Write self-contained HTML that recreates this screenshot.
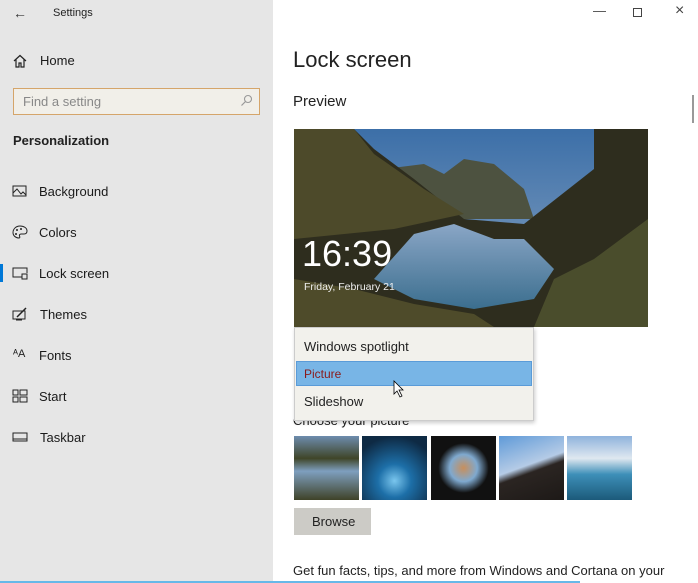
<!DOCTYPE html>
<html><head><meta charset="utf-8"><style>
*{margin:0;padding:0;box-sizing:border-box}
body{width:698px;height:583px;overflow:hidden;font-family:"Liberation Sans",sans-serif;background:#fff;position:relative;color:#000}
.side{position:absolute;left:0;top:0;width:273px;height:583px;background:#e6e6e6}
.t{position:absolute;white-space:nowrap}
.nav{position:absolute;left:39px;font-size:13px;color:#1a1a1a}
.ic{position:absolute;left:12px;width:16px;height:14px}
.thumb{position:absolute;top:436px;width:65px;height:64px}
</style></head><body>
<div class="side">
<div class="t" style="left:13px;top:5px;font-size:14px;color:#333">&#8592;</div>
<div class="t" style="left:53px;top:7px;font-size:11px;color:#222">Settings</div>
<svg class="ic" style="top:54px" viewBox="0 0 16 14"><path d="M2 7L8 1.5L14 7M4 5.5V13H7V9H9V13H12V5.5" fill="none" stroke="#222" stroke-width="1.2"/></svg>
<div class="nav" style="top:53px;left:40px">Home</div>
<div style="position:absolute;left:13px;top:88px;width:247px;height:27px;border:1px solid #d5a56a;background:#f1efe9"></div>
<div class="t" style="left:23px;top:94px;font-size:13px;color:#888">Find a setting</div>
<svg style="position:absolute;left:240px;top:94px" width="13" height="13" viewBox="0 0 13 13"><circle cx="8" cy="5" r="3.5" fill="none" stroke="#999" stroke-width="1.1"/><path d="M5.5 7.5L1.5 11.5" stroke="#999" stroke-width="1.2"/></svg>
<div class="t" style="left:13px;top:133px;font-size:13px;font-weight:bold;color:#222">Personalization</div>
<svg class="ic" style="top:184px" viewBox="0 0 16 14"><rect x="1" y="2" width="13" height="10" fill="none" stroke="#222"/><path d="M1 9L5 5L9 10L11 8L14 11" fill="none" stroke="#222"/></svg>
<div class="nav" style="top:184px">Background</div>
<svg class="ic" style="top:225px" viewBox="0 0 16 14"><path d="M8 1C4 1 1 4 1 7.5C1 11 4 13 7 13C8 13 8 12 7.5 11C7 10 8 9 9 9H12C14 9 15 8 15 6C15 3 12 1 8 1Z" fill="none" stroke="#222"/><circle cx="5" cy="5" r="1" fill="#222"/><circle cx="9" cy="4" r="1" fill="#222"/><circle cx="4" cy="9" r="1" fill="#222"/></svg>
<div class="nav" style="top:225px">Colors</div>
<div style="position:absolute;left:0;top:264px;width:3px;height:18px;background:#0078d7"></div>
<svg class="ic" style="top:266px" viewBox="0 0 16 14"><path d="M10 11H1V2H15V7" fill="none" stroke="#222"/><rect x="10" y="8" width="5" height="5" fill="none" stroke="#222"/></svg>
<div class="nav" style="top:266px">Lock screen</div>
<svg class="ic" style="top:307px" viewBox="0 0 16 14"><rect x="1" y="4" width="12" height="8" fill="none" stroke="#222"/><path d="M5 10L14 1" stroke="#222" stroke-width="1.5"/><path d="M4 13H10" stroke="#222"/></svg>
<div class="nav" style="top:307px;left:40px">Themes</div>
<div class="t" style="left:13px;top:348px;font-size:11px;color:#222">ᴬA</div>
<div class="nav" style="top:348px">Fonts</div>
<svg class="ic" style="top:389px" viewBox="0 0 16 14"><rect x="1" y="1" width="5" height="5" fill="none" stroke="#222"/><rect x="8" y="1" width="7" height="5" fill="none" stroke="#222"/><rect x="1" y="8" width="5" height="5" fill="none" stroke="#222"/><rect x="8" y="8" width="7" height="5" fill="none" stroke="#222"/></svg>
<div class="nav" style="top:389px">Start</div>
<svg class="ic" style="top:430px" viewBox="0 0 16 14"><rect x="1" y="3" width="14" height="8" fill="none" stroke="#222"/><path d="M1 9H15" stroke="#222"/></svg>
<div class="nav" style="top:430px;left:40px">Taskbar</div>
</div>
<div class="t" style="left:593px;top:3px;font-size:13px;color:#444">&#8212;</div>
<div style="position:absolute;left:633px;top:8px;width:9px;height:9px;border:1px solid #444"></div>
<div class="t" style="left:675px;top:2px;font-size:16px;color:#444">&#215;</div>
<div style="position:absolute;left:692px;top:95px;width:2px;height:28px;background:#999"></div>
<div class="t" style="left:293px;top:47px;font-size:22px;color:#222">Lock screen</div>
<div class="t" style="left:293px;top:93px;font-size:15px;color:#222">Preview</div>
<svg style="position:absolute;left:294px;top:129px" width="354" height="198" viewBox="0 0 354 198">
<defs><linearGradient id="sky" x1="0" y1="0" x2="0" y2="1"><stop offset="0" stop-color="#3c6fa8"/><stop offset="1" stop-color="#8fa8c4"/></linearGradient>
<linearGradient id="wat" x1="0" y1="0" x2="0" y2="1"><stop offset="0" stop-color="#8aa6c6"/><stop offset="1" stop-color="#3b6e8e"/></linearGradient></defs>
<rect width="354" height="198" fill="url(#sky)"/>
<path d="M90 40L130 35L150 45L170 30L200 35L230 60L240 90L100 90Z" fill="#4d5240"/>
<path d="M0 0H60L80 20L120 50L170 90L230 95L300 40L300 0H354V198H0Z" fill="#2e2d1e"/>
<path d="M0 0H60L80 25L130 60L170 85L100 100L0 110Z" fill="#4d4a2a"/>
<path d="M120 105L160 95L200 110L230 110L260 140L240 170L180 180L120 170L80 150Z" fill="url(#wat)"/>
<path d="M0 150L60 160L120 175L180 185L200 198H0Z" fill="#4e4b2a"/>
<path d="M354 90L300 130L260 150L240 198H354Z" fill="#4a4d2c"/>
<text x="8" y="137" font-family="Liberation Sans" font-size="36" fill="#fff">16:39</text>
<text x="10" y="161" font-family="Liberation Sans" font-size="10.5" fill="#eee">Friday, February 21</text>
</svg>
<div class="t" style="left:293px;top:413px;font-size:13px;color:#222">Choose your picture</div>
<div style="position:absolute;left:294px;top:327px;width:240px;height:94px;background:#f2f1ec;border:1px solid #ccc;box-shadow:1px 2px 4px rgba(0,0,0,.2)"></div>
<div class="t" style="left:304px;top:339px;font-size:13px;color:#222">Windows spotlight</div>
<div style="position:absolute;left:296px;top:361px;width:236px;height:25px;background:#78b5e6;border:1px solid #5a9bd8"></div>
<div class="t" style="left:304px;top:367px;font-size:12px;color:#8a1a1a">Picture</div>
<div class="t" style="left:304px;top:394px;font-size:13px;color:#222">Slideshow</div>
<svg style="position:absolute;left:393px;top:380px" width="12" height="18" viewBox="0 0 12 18"><path d="M1 1V14L4 11L7 17L9 16L6 10H10Z" fill="#fff" stroke="#000" stroke-width=".8"/></svg>
<div class="thumb" style="left:294px;background:linear-gradient(#6d8cae 0,#3f4528 35%,#7e9fbf 55%,#3f4228 100%)"></div>
<div class="thumb" style="left:362px;background:radial-gradient(circle at 50% 70%,#7ac6ee 0,#1d6fa8 30%,#0e2a44 80%)"></div>
<div class="thumb" style="left:431px;background:radial-gradient(ellipse at 50% 50%,#c88f5c 0,#7fa9cf 30%,#111 55%)"></div>
<div class="thumb" style="left:499px;background:linear-gradient(160deg,#5f9ad8 0,#b5cbe6 45%,#2b2522 55%,#1d1917 100%)"></div>
<div class="thumb" style="left:567px;background:linear-gradient(#8fb3dc 0,#dfe8f0 35%,#3d8fb8 60%,#1c5a7a 100%)"></div>
<div style="position:absolute;left:294px;top:508px;width:77px;height:27px;background:#cccbc6"></div>
<div class="t" style="left:312px;top:514px;font-size:13px;color:#222">Browse</div>
<div class="t" style="left:293px;top:563px;font-size:13px;color:#222">Get fun facts, tips, and more from Windows and Cortana on your</div>
<div style="position:absolute;left:0;top:581px;width:580px;height:2px;background:#67b8e8"></div>
</body></html>
